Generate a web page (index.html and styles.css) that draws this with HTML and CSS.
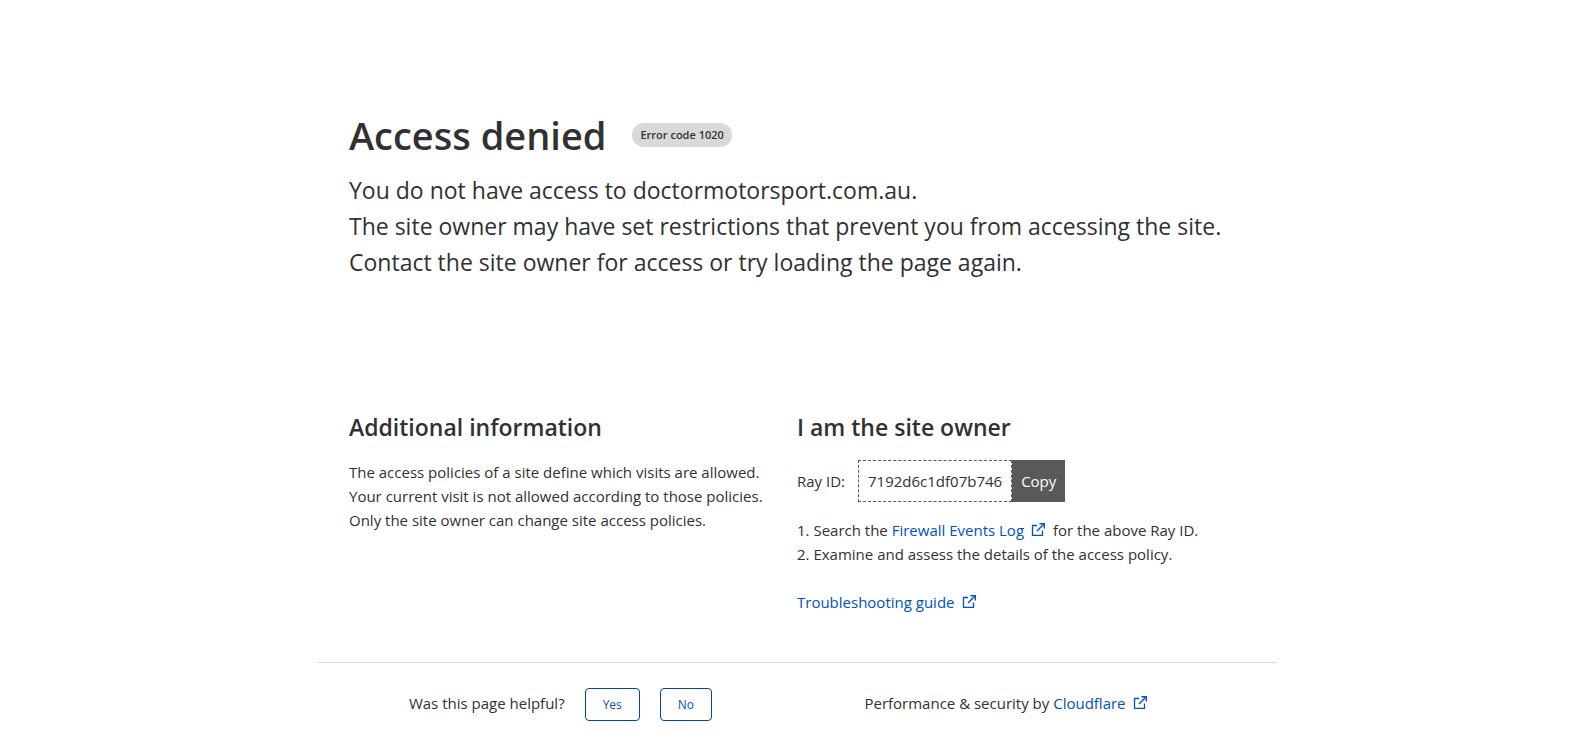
FILE: index.html
```html
<!DOCTYPE html>
<html lang="en">
<head>
<meta charset="utf-8">
<meta name="viewport" content="width=device-width, initial-scale=1">
<title>Access denied</title>
<link rel="stylesheet" href="styles.css">
</head>
<body>
<svg class="sprite" aria-hidden="true">
  <symbol id="external" viewBox="0 0 14 14">
    <path d="M6 3.500H1.500V13.300H11.500V8.500" fill="none" stroke="currentColor" stroke-width="1.300"/>
    <path d="M6 9L12 3" fill="none" stroke="currentColor" stroke-width="1.400"/>
    <path d="M8.500 1H14V6.500H12.600V3.400L11.600 2.400H8.500Z" fill="currentColor"/>
  </symbol>
</svg>
<div class="page">
  <header class="hero">
    <div class="title-row">
      <h1 class="title">Access denied</h1>
      <span class="badge">Error code 1020</span>
    </div>
    <p class="lead">You do not have access to doctormotorsport.com.au.</p>
    <p class="lead">The site owner may have set restrictions that prevent you from accessing the site.</p>
    <p class="lead">Contact the site owner for access or try loading the page again.</p>
  </header>
  <main class="columns">
    <section>
      <h2 class="heading">Additional information</h2>
      <p>The access policies of a site define which visits are allowed.<br>Your current visit is not allowed according to those policies.<br>Only the site owner can change site access policies.</p>
    </section>
    <section>
      <h2 class="heading">I am the site owner</h2>
      <div class="ray">
        <span class="ray-label">Ray ID:</span>
        <span class="ray-id">7192d6c1df07b746</span>
        <button class="copy" type="button">Copy</button>
      </div>
      <ol class="steps">
        <li>Search the <a class="link" href="#">Firewall Events Log<svg class="icon"><use href="#external"/></svg></a> for the above Ray ID.</li>
        <li>Examine and assess the details of the access policy.</li>
      </ol>
      <a class="link" href="#">Troubleshooting guide<svg class="icon"><use href="#external"/></svg></a>
    </section>
  </main>
  <footer class="footer">
    <div class="feedback">
      <span>Was this page helpful?</span>
      <button class="answer" type="button">Yes</button>
      <button class="answer" type="button">No</button>
    </div>
    <div class="credit">Performance &amp; security by <a class="link" href="#">Cloudflare<svg class="icon"><use href="#external"/></svg></a></div>
  </footer>
</div>
</body>
</html>
```
FILE: styles.css
```css
* {
  box-sizing: border-box;
}

body {
  margin: 0;
  padding-left: 9px;
  background: #fff;
  color: #313131;
  font: 15px/24px "Open Sans", "Segoe UI", sans-serif;
}

h1, h2, p, ol {
  margin: 0;
  padding: 0;
}

.sprite {
  display: none;
}

.page {
  max-width: 960px;
  margin: 0 auto;
  padding-top: 104px;
}

.hero {
  padding: 0 32px;
}

.title-row {
  display: flex;
  flex-wrap: wrap;
  align-items: center;
  gap: 26px;
  padding-bottom: 6px;
}

.title {
  font-size: 38px;
  line-height: 62px;
  font-weight: 600;
}

.badge {
  padding: 0 8px;
  border-radius: 12px;
  background: #d9d9d9;
  font-size: 11px;
  font-weight: 600;
}

.lead {
  font-size: 23px;
  line-height: 36px;
}

.columns {
  display: grid;
  grid-template-columns: 1fr 1fr;
  padding: 129px 32px 48px;
}

.heading {
  margin-bottom: 15px;
  font-size: 23px;
  line-height: 36px;
  font-weight: 600;
}

.ray {
  display: flex;
  align-items: center;
  margin-bottom: 16px;
}

.ray-label {
  margin-right: 13px;
}

.ray-id {
  padding: 8px 9px;
  border: 1px dashed #595959;
}

.copy {
  padding: 9px;
  border: 0;
  background: #595959;
  color: #fff;
  font: inherit;
}

.steps {
  margin-bottom: 24px;
  list-style-position: inside;
}

.link {
  color: #0051c3;
  text-decoration: none;
}

.icon {
  width: 14px;
  height: 14px;
  margin: 0 4px 0 7px;
}

.footer {
  display: grid;
  grid-template-columns: 1fr 1fr;
  align-items: baseline;
  padding: 25px 46px 18px 20px;
  border-top: 1px solid #d9d9d9;
}

.feedback {
  display: flex;
  align-items: baseline;
  justify-content: center;
  gap: 20px;
}

.answer {
  padding: 6px 17px;
  border: 1px solid #0045a6;
  border-radius: 4px;
  background: #fff;
  color: #0051c3;
  font: 12px/19px "Open Sans", "Segoe UI", sans-serif;
}

.credit {
  text-align: center;
}

@media (max-width: 760px) {
  .columns,
  .footer {
    grid-template-columns: 1fr;
    gap: 32px;
  }
}
```
